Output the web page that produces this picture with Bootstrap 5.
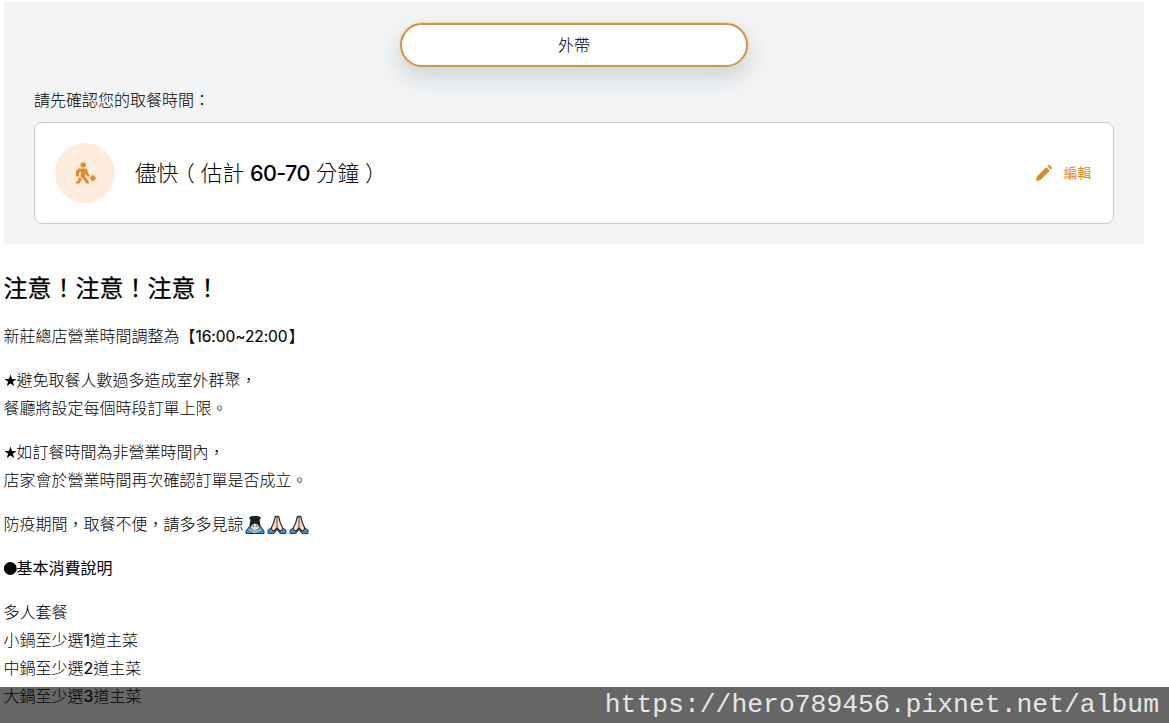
<!DOCTYPE html>
<html lang="zh-Hant">
<head>
<meta charset="utf-8">
<meta name="viewport" content="width=device-width, initial-scale=1">
<title>外帶</title>
<link href="https://cdn.jsdelivr.net/npm/bootstrap@5.3.0/dist/css/bootstrap.min.css" rel="stylesheet">
<style>
  body { font-family: Inter, "Noto Sans CJK TC", sans-serif; font-size: 16px; line-height: 28px; font-weight: 300; color: #000; height: 723px; }
  .order-panel { background: #f2f4f6; width: 1140px; height: 242px; margin: 2px 0 0 4px; padding: 21px 30px 0; }
  .mode-btn { width: 348px; height: 44px; background: #fff; border: 2px solid #cf9250; box-shadow: 0 0 1px 1px #fbd9ac, 0 10px 22px rgba(60,75,75,.2); font-weight: 300; font-size: 16px; color: #000; }
  .time-label { margin-top: 19px; height: 28px; }
  .time-card { margin-top: 8px; height: 102px; border: 1px solid #c9cbcd; border-radius: 8px; padding: 0 22px 0 20px; }
  .walk-icon { width: 60px; height: 60px; background: #feecdc; }
  .eta { font-size: 21.6px; margin-left: 20px; }
  .eta b { font-weight: 500; letter-spacing: -.65px; }
  .paren-open { font-feature-settings: "halt"; margin-left: 5.8px; margin-right: 6px; }
  .paren-close { display: inline-block; text-indent: 6px; }
  .edit-link { color: #e4872b; font-size: 13.6px; font-weight: 400; gap: 11px; }
  .notice { margin: 27px 0 0 3.500px; }
  .notice h2 { font-size: 24px; line-height: 36px; font-weight: 400; margin-bottom: 15px; -webkit-text-stroke: .25px #000; }
  .notice p { margin-bottom: 16px; white-space: nowrap; }
  .notice .hours-line { height: 28px; margin-bottom: 15.500px; }
  .num { font-weight: 400; -webkit-text-stroke: .15px #000; }
  .hours { display: inline-block; width: 93px; letter-spacing: -.05px; font-size: 15.5px; line-height: 20px; }
  .bullet { display: inline-block; width: 13px; height: 28px; vertical-align: top; }
  .bullet svg { display: block; }
  .emoji { width: 22px; height: 20px; vertical-align: -5px; }
  .site-mark { height: 36px; background: rgba(0,0,0,.6); color: #e6e6e6; font-family: "Liberation Mono", monospace; font-size: 26.4px; font-weight: 400; line-height: 37px; padding-right: 10px; }
</style>
</head>
<body class="position-relative overflow-hidden bg-white">
<svg class="d-none" xmlns="http://www.w3.org/2000/svg">
  <symbol id="pray" viewBox="0 0 22 20">
    <path d="M2 18.500v-3.500l5-3 4 2.500 4-2.500 5 3v3.500h-6l-3-4-3 4z" fill="#4a8fc0" stroke="#1b4668" stroke-width="1"/>
    <path d="M9.300 1.500Q10.300.9 11 2q.7-1.100 1.700-.5l1.500 6L17 13.500l-2.700 3L11 13l-3.300 3.500-2.700-3 2.800-6z" fill="#f9dfc9" stroke="#2b211e" stroke-width="1.100" stroke-linejoin="round"/>
    <path d="M11 2v11" stroke="#4a362c" stroke-width=".9"/>
  </symbol>
</svg>

<section class="order-panel">
  <button class="mode-btn btn rounded-pill d-flex align-items-center justify-content-center mx-auto p-0">外帶</button>
  <div class="time-label">請先確認您的取餐時間：</div>
  <div class="time-card bg-white d-flex align-items-center">
    <div class="walk-icon rounded-circle d-flex align-items-center justify-content-center flex-shrink-0">
      <svg width="24" height="24" viewBox="0 0 24 24" fill="#e08a2c">
        <circle cx="10.200" cy="4" r="2.700"/>
        <path d="M5.500 7.500h7.500l1.300 1.400.8 3.600 1.800 2-1.500 1.500-2.400-2.300-.7-2-.4 3.800 2.700 3.200 1.600 3.800h-3.100l-1.300-2.700-4.200-4.300.3-4.700-2 .8v3.900H3V10z"/>
        <path d="M6.500 15.800l2.400 2.200-2.400 4.500H2.800v-1.700l1.900-.9z"/>
        <path d="M19.800 14.500l2.500 2.600-2.500 2.600-2.500-2.600z" stroke="#e08a2c" stroke-width="1.200" stroke-linejoin="round"/>
      </svg>
    </div>
    <div class="eta">儘快<span class="paren-open">（</span>估計 <b>60-70</b> 分鐘<span class="paren-close">）</span></div>
    <a class="edit-link d-flex align-items-center ms-auto text-decoration-none" href="#">
      <svg width="18" height="18" viewBox="0 0 18 18">
        <path d="M11.200 3.200 14.800 6.800 5.400 16 1 17l1-4.500z" fill="#e18524"/>
        <path d="M12.200 2.200 13.500 1Q14.500.5 15.300 1.300L16.700 2.700Q17.500 3.500 17 4.500L15.800 5.800z" fill="#d99b5b"/>
      </svg>
      <span>編輯</span>
    </a>
  </div>
</section>

<main class="notice">
  <h2>注意！注意！注意！</h2>
  <p class="hours-line">新莊總店營業時間調整為【<span class="num hours">16:00~22:00</span>】</p>
  <p><span class="bullet"><svg width="13" height="28"><path d="M6.500 8.500 8 13h4.500l-3.600 2.700 1.300 4.300-3.700-2.600L2.800 20l1.300-4.300L.5 13H5z"/></svg></span>避免取餐人數過多造成室外群聚，<br>餐廳將設定每個時段訂單上限。</p>
  <p><span class="bullet"><svg width="13" height="28"><path d="M6.500 8.500 8 13h4.500l-3.600 2.700 1.300 4.300-3.700-2.600L2.800 20l1.300-4.300L.5 13H5z"/></svg></span>如訂餐時間為非營業時間內，<br>店家會於營業時間再次確認訂單是否成立。</p>
  <p>防疫期間，取餐不便，請多多見諒<svg class="emoji" viewBox="0 0 22 20">
      <path d="M2 18.500v-2.500l4.500-6h9l4.500 6v2.500z" fill="#4a8fc0" stroke="#173a56"/>
      <path d="M5 2.500 8 1h6l3 1.500-1.500 2.500 1 5-2.500 4H8l-2.500-4 1-5z" fill="#15222a"/>
      <path d="M7.500 10l3.500-1.500 3.500 1.500.5 3-4 3-4-3z" fill="#f4d6c4"/>
      <path d="M8.500 11h1.500m2 0h1.500" stroke="#203846" fill="none"/>
      <path d="M5 14.500l6 3 6-3" stroke="#d8e6ee" fill="none"/>
    </svg><svg class="emoji"><use href="#pray"/></svg><svg class="emoji"><use href="#pray"/></svg></p>
  <p class="fw-normal"><span class="bullet"><svg width="13" height="28"><circle cx="6.300" cy="14.500" r="6.400"/></svg></span>基本消費說明</p>
  <p>多人套餐<br>小鍋至少選<span class="num">1</span>道主菜<br>中鍋至少選<span class="num">2</span>道主菜<br>大鍋至少選<span class="num">3</span>道主菜</p>
</main>

<footer class="site-mark position-absolute bottom-0 start-0 w-100 text-end">https://hero789456.pixnet.net/album</footer>
<script src="https://cdn.jsdelivr.net/npm/bootstrap@5.3.0/dist/js/bootstrap.bundle.min.js"></script>
</body>
</html>
